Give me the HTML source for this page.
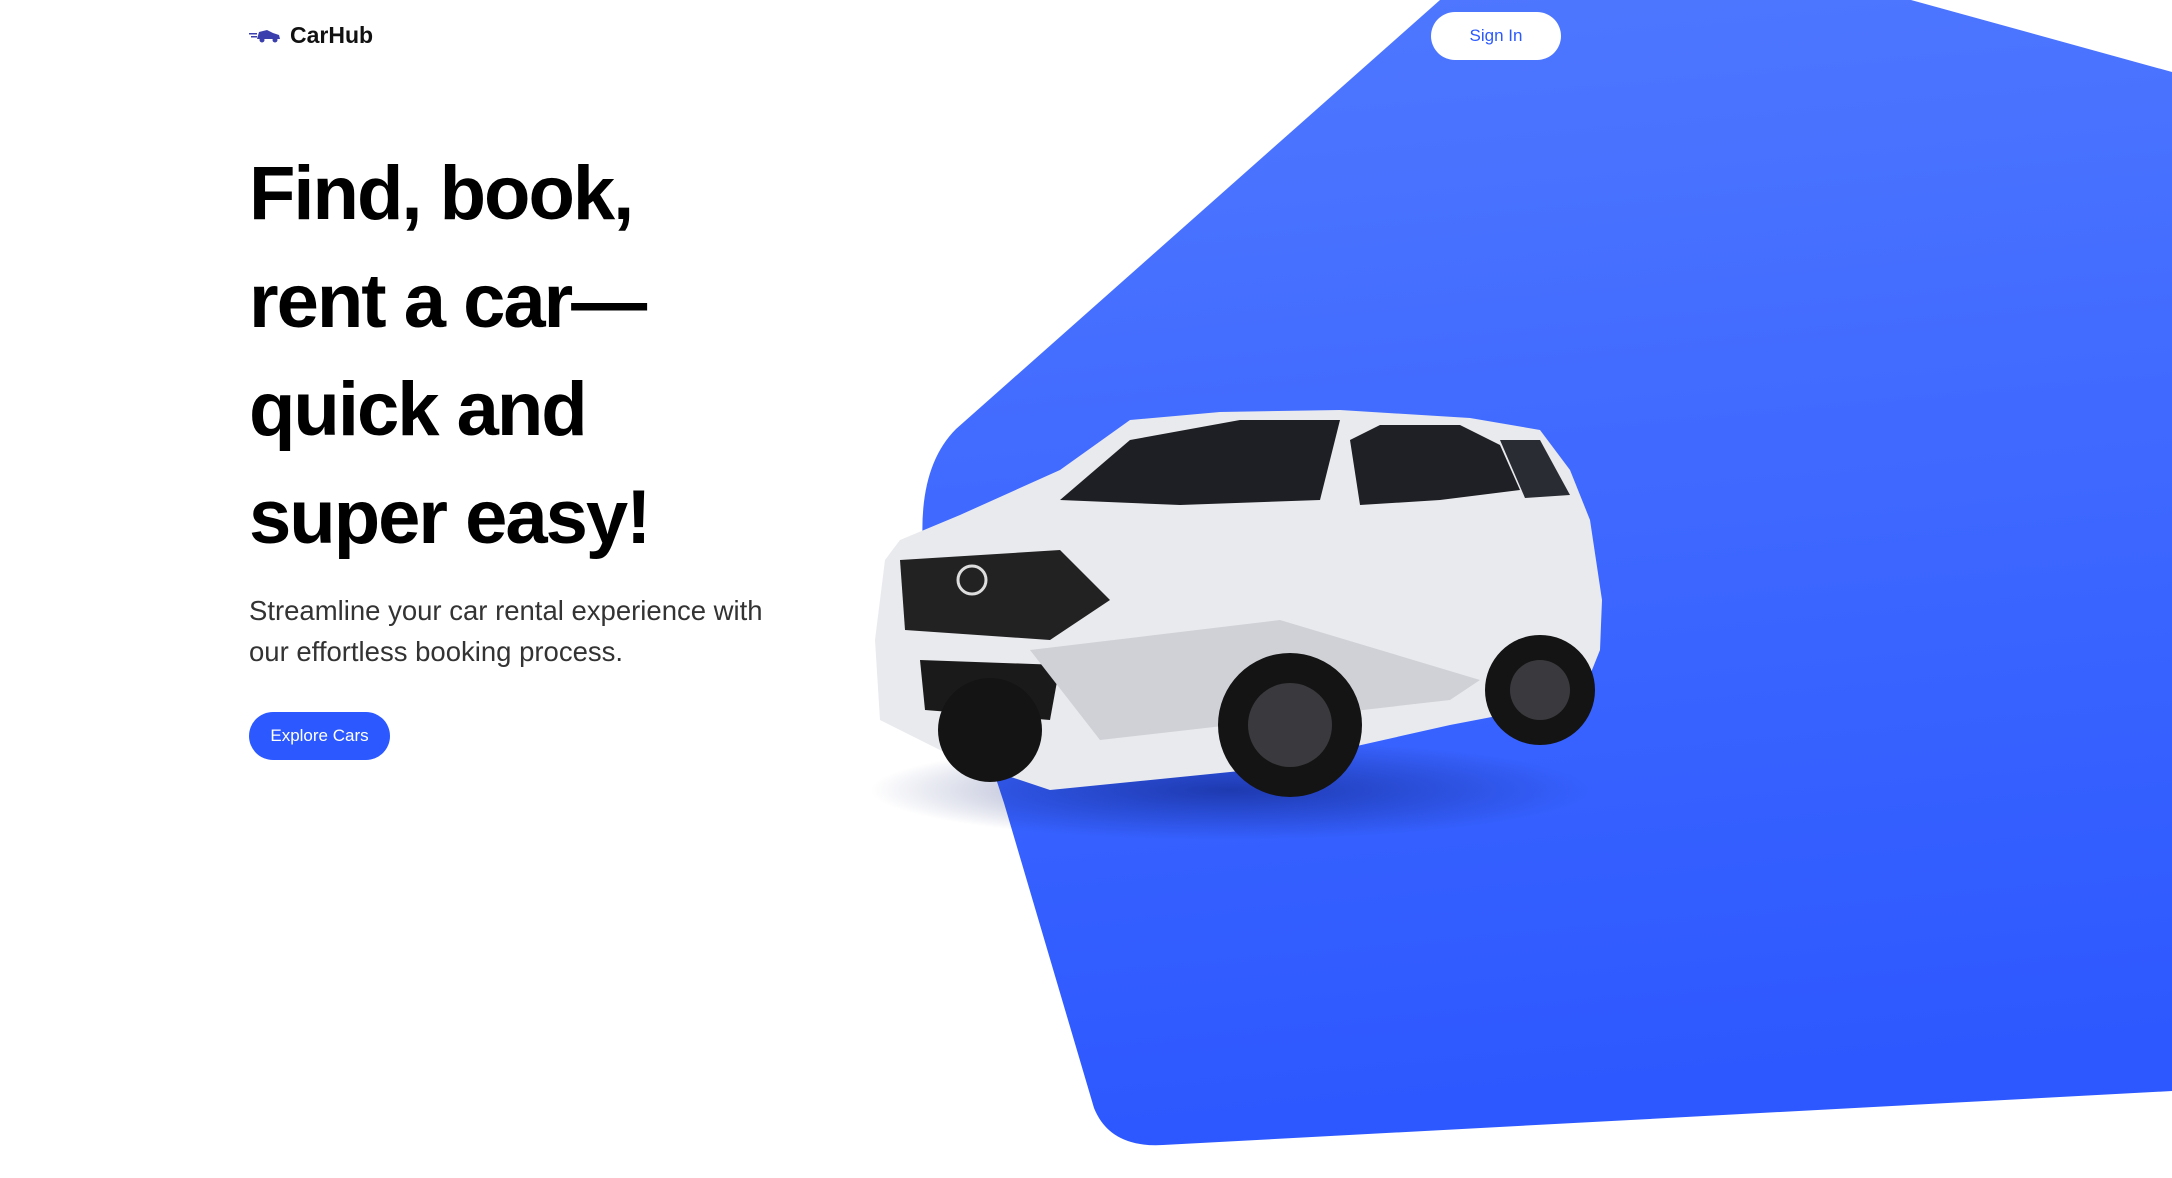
<!DOCTYPE html>
<html><head><meta charset="utf-8"><style>
*{margin:0;padding:0;box-sizing:border-box}
body{width:2172px;height:1178px;overflow:hidden;background:#fff;font-family:"Liberation Sans",sans-serif;position:relative}
.logo{position:absolute;left:249px;top:22px;display:flex;align-items:center;gap:9px;font-weight:bold;font-size:23px;color:#111}
.signin{position:absolute;left:1431px;top:12px;width:130px;height:48px;border-radius:24px;background:#fff;color:#2b59ff;font-size:17px;display:flex;align-items:center;justify-content:center}
h1{position:absolute;left:249px;top:140px;font-size:76px;line-height:108px;font-weight:bold;color:#000;letter-spacing:-2px}
p{position:absolute;left:249px;top:590px;font-size:27.5px;line-height:41px;color:#333;letter-spacing:0}
.btn{position:absolute;left:249px;top:712px;width:141px;height:48px;border-radius:24px;background:#2b59ff;color:#fff;font-size:17px;display:flex;align-items:center;justify-content:center}
svg.bg{position:absolute;left:0;top:0}
</style></head><body>
<svg class="bg" width="2172" height="1178" viewBox="0 0 2172 1178">
<defs><linearGradient id="g" x1="0" y1="0" x2="0.1" y2="1"><stop offset="0" stop-color="#4f78ff"/><stop offset="1" stop-color="#2d58ff"/></linearGradient>
<radialGradient id="sh" cx="0.5" cy="0.5" r="0.5"><stop offset="0" stop-color="#0a1a70" stop-opacity=".55"/><stop offset="1" stop-color="#0a1a70" stop-opacity="0"/></radialGradient></defs>
<path d="M1440 0 L1911 0 L2172 72 L2172 1091 L1163 1145 Q1110 1148 1094 1108 L1004 803 L924 560 Q915 470 956 429 Z" fill="url(#g)"/>
<ellipse cx="1230" cy="790" rx="360" ry="50" fill="url(#sh)"/>
<g>
<path d="M900 540 L960 515 L1060 470 L1130 420 L1220 412 L1340 410 L1470 418 L1540 430 L1570 470 L1590 520 L1602 600 L1600 650 L1580 700 L1450 725 L1250 770 L1050 790 L960 760 L880 720 L875 640 L885 560 Z" fill="#e9eaee"/>
<path d="M1060 500 L1130 440 L1240 420 L1340 420 L1320 500 L1180 505 Z" fill="#1d1f24"/>
<path d="M1350 440 L1380 425 L1460 425 L1500 445 L1520 490 L1440 500 L1360 505 Z" fill="#1e2026"/>
<path d="M1500 440 L1540 440 L1570 495 L1525 498 Z" fill="#2a2c33"/>
<path d="M900 560 L1060 550 L1110 600 L1050 640 L905 630 Z" fill="#222"/>
<path d="M920 660 L1060 665 L1050 720 L925 710 Z" fill="#1a1a1a"/>
<path d="M1030 650 L1280 620 L1480 680 L1450 700 L1100 740 Z" fill="#cfd1d6"/>
<circle cx="1290" cy="725" r="72" fill="#141414"/><circle cx="1290" cy="725" r="42" fill="#3a3a3e"/>
<circle cx="1540" cy="690" r="55" fill="#141414"/><circle cx="1540" cy="690" r="30" fill="#3a3a3e"/>
<circle cx="990" cy="730" r="52" fill="#141414"/>
<circle cx="972" cy="580" r="14" fill="none" stroke="#ddd" stroke-width="3"/>
</g>
</svg>
<div class="logo"><svg width="32" height="14" viewBox="0 0 32 14"><path d="M10 3 L18 1 L24 4 L30 6 L31 10 L8 10 Z" fill="#3b3fae"/><circle cx="13" cy="11" r="2.5" fill="#3b3fae"/><circle cx="26" cy="11" r="2.5" fill="#3b3fae"/><rect x="0" y="4" width="8" height="1.5" fill="#3b3fae"/><rect x="2" y="7" width="6" height="1.5" fill="#3b3fae"/></svg>CarHub</div>
<div class="signin">Sign In</div>
<h1>Find, book,<br>rent a car—<br>quick and<br>super easy!</h1>
<p>Streamline your car rental experience with<br>our effortless booking process.</p>
<div class="btn">Explore Cars</div>
</body></html>
